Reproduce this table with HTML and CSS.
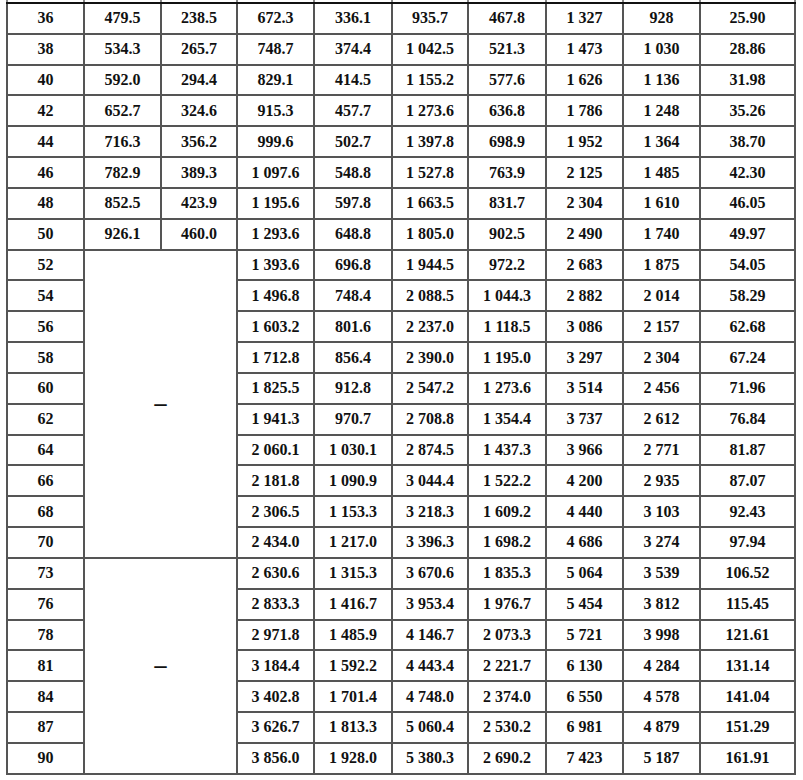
FILE: index.html
```html
<!DOCTYPE html>
<html>
<head>
<meta charset="utf-8">
<link rel="stylesheet" href="styles.css">
</head>
<body>
<table class="grid">
<colgroup>
<col class="c"><col class="c"><col class="c3"><col class="c"><col class="c5"><col class="c3"><col class="c5"><col class="c"><col class="c"><col class="last">
</colgroup>
<tbody>
<tr class="stub"><td></td><td></td><td></td><td></td><td></td><td></td><td></td><td></td><td></td><td></td></tr>
<tr><td>36</td><td>479.5</td><td>238.5</td><td>672.3</td><td>336.1</td><td>935.7</td><td>467.8</td><td>1 327</td><td>928</td><td>25.90</td></tr>
<tr><td>38</td><td>534.3</td><td>265.7</td><td>748.7</td><td>374.4</td><td>1 042.5</td><td>521.3</td><td>1 473</td><td>1 030</td><td>28.86</td></tr>
<tr><td>40</td><td>592.0</td><td>294.4</td><td>829.1</td><td>414.5</td><td>1 155.2</td><td>577.6</td><td>1 626</td><td>1 136</td><td>31.98</td></tr>
<tr><td>42</td><td>652.7</td><td>324.6</td><td>915.3</td><td>457.7</td><td>1 273.6</td><td>636.8</td><td>1 786</td><td>1 248</td><td>35.26</td></tr>
<tr><td>44</td><td>716.3</td><td>356.2</td><td>999.6</td><td>502.7</td><td>1 397.8</td><td>698.9</td><td>1 952</td><td>1 364</td><td>38.70</td></tr>
<tr><td>46</td><td>782.9</td><td>389.3</td><td>1 097.6</td><td>548.8</td><td>1 527.8</td><td>763.9</td><td>2 125</td><td>1 485</td><td>42.30</td></tr>
<tr><td>48</td><td>852.5</td><td>423.9</td><td>1 195.6</td><td>597.8</td><td>1 663.5</td><td>831.7</td><td>2 304</td><td>1 610</td><td>46.05</td></tr>
<tr><td>50</td><td>926.1</td><td>460.0</td><td>1 293.6</td><td>648.8</td><td>1 805.0</td><td>902.5</td><td>2 490</td><td>1 740</td><td>49.97</td></tr>
<tr><td>52</td><td class="merged" colspan="2" rowspan="10">—</td><td>1 393.6</td><td>696.8</td><td>1 944.5</td><td>972.2</td><td>2 683</td><td>1 875</td><td>54.05</td></tr>
<tr><td>54</td><td>1 496.8</td><td>748.4</td><td>2 088.5</td><td>1 044.3</td><td>2 882</td><td>2 014</td><td>58.29</td></tr>
<tr><td>56</td><td>1 603.2</td><td>801.6</td><td>2 237.0</td><td>1 118.5</td><td>3 086</td><td>2 157</td><td>62.68</td></tr>
<tr><td>58</td><td>1 712.8</td><td>856.4</td><td>2 390.0</td><td>1 195.0</td><td>3 297</td><td>2 304</td><td>67.24</td></tr>
<tr><td>60</td><td>1 825.5</td><td>912.8</td><td>2 547.2</td><td>1 273.6</td><td>3 514</td><td>2 456</td><td>71.96</td></tr>
<tr><td>62</td><td>1 941.3</td><td>970.7</td><td>2 708.8</td><td>1 354.4</td><td>3 737</td><td>2 612</td><td>76.84</td></tr>
<tr><td>64</td><td>2 060.1</td><td>1 030.1</td><td>2 874.5</td><td>1 437.3</td><td>3 966</td><td>2 771</td><td>81.87</td></tr>
<tr><td>66</td><td>2 181.8</td><td>1 090.9</td><td>3 044.4</td><td>1 522.2</td><td>4 200</td><td>2 935</td><td>87.07</td></tr>
<tr><td>68</td><td>2 306.5</td><td>1 153.3</td><td>3 218.3</td><td>1 609.2</td><td>4 440</td><td>3 103</td><td>92.43</td></tr>
<tr><td>70</td><td>2 434.0</td><td>1 217.0</td><td>3 396.3</td><td>1 698.2</td><td>4 686</td><td>3 274</td><td>97.94</td></tr>
<tr><td>73</td><td class="merged" colspan="2" rowspan="7">—</td><td>2 630.6</td><td>1 315.3</td><td>3 670.6</td><td>1 835.3</td><td>5 064</td><td>3 539</td><td>106.52</td></tr>
<tr><td>76</td><td>2 833.3</td><td>1 416.7</td><td>3 953.4</td><td>1 976.7</td><td>5 454</td><td>3 812</td><td>115.45</td></tr>
<tr><td>78</td><td>2 971.8</td><td>1 485.9</td><td>4 146.7</td><td>2 073.3</td><td>5 721</td><td>3 998</td><td>121.61</td></tr>
<tr><td>81</td><td>3 184.4</td><td>1 592.2</td><td>4 443.4</td><td>2 221.7</td><td>6 130</td><td>4 284</td><td>131.14</td></tr>
<tr><td>84</td><td>3 402.8</td><td>1 701.4</td><td>4 748.0</td><td>2 374.0</td><td>6 550</td><td>4 578</td><td>141.04</td></tr>
<tr><td>87</td><td>3 626.7</td><td>1 813.3</td><td>5 060.4</td><td>2 530.2</td><td>6 981</td><td>4 879</td><td>151.29</td></tr>
<tr><td>90</td><td>3 856.0</td><td>1 928.0</td><td>5 380.3</td><td>2 690.2</td><td>7 423</td><td>5 187</td><td>161.91</td></tr>
</tbody>
</table>
</body>
</html>
```

FILE: styles.css
```css
html, body {
  margin: 0;
  padding: 0;
  background: #ffffff;
}
body {
  padding-left: 6px;
  font-family: "Liberation Serif", "Times New Roman", serif;
  color: #111111;
}
.grid {
  border-collapse: collapse;
  table-layout: fixed;
  width: 788px;
  border-left: 2px solid #111111;
  border-right: 2px solid #111111;
  border-bottom: 2px solid #111111;
}
.c { width: 77px; }
.c3 { width: 76px; }
.c5 { width: 78px; }
.last { width: 95px; }
.grid td {
  border: 2px solid #555555;
  height: 28.84px;
  padding: 0;
  text-align: center;
  vertical-align: middle;
  font-size: 16px;
  font-weight: bold;
  white-space: nowrap;
  line-height: 1;
}
.grid tr.stub td {
  height: 2px;
  border-top: none;
  border-left-color: #888888;
  border-right-color: #888888;
  border-bottom: 2px solid #111111;
}
.grid td.merged {
  font-family: "DejaVu Sans", sans-serif;
  font-weight: bold;
  font-size: 14px;
}
```
